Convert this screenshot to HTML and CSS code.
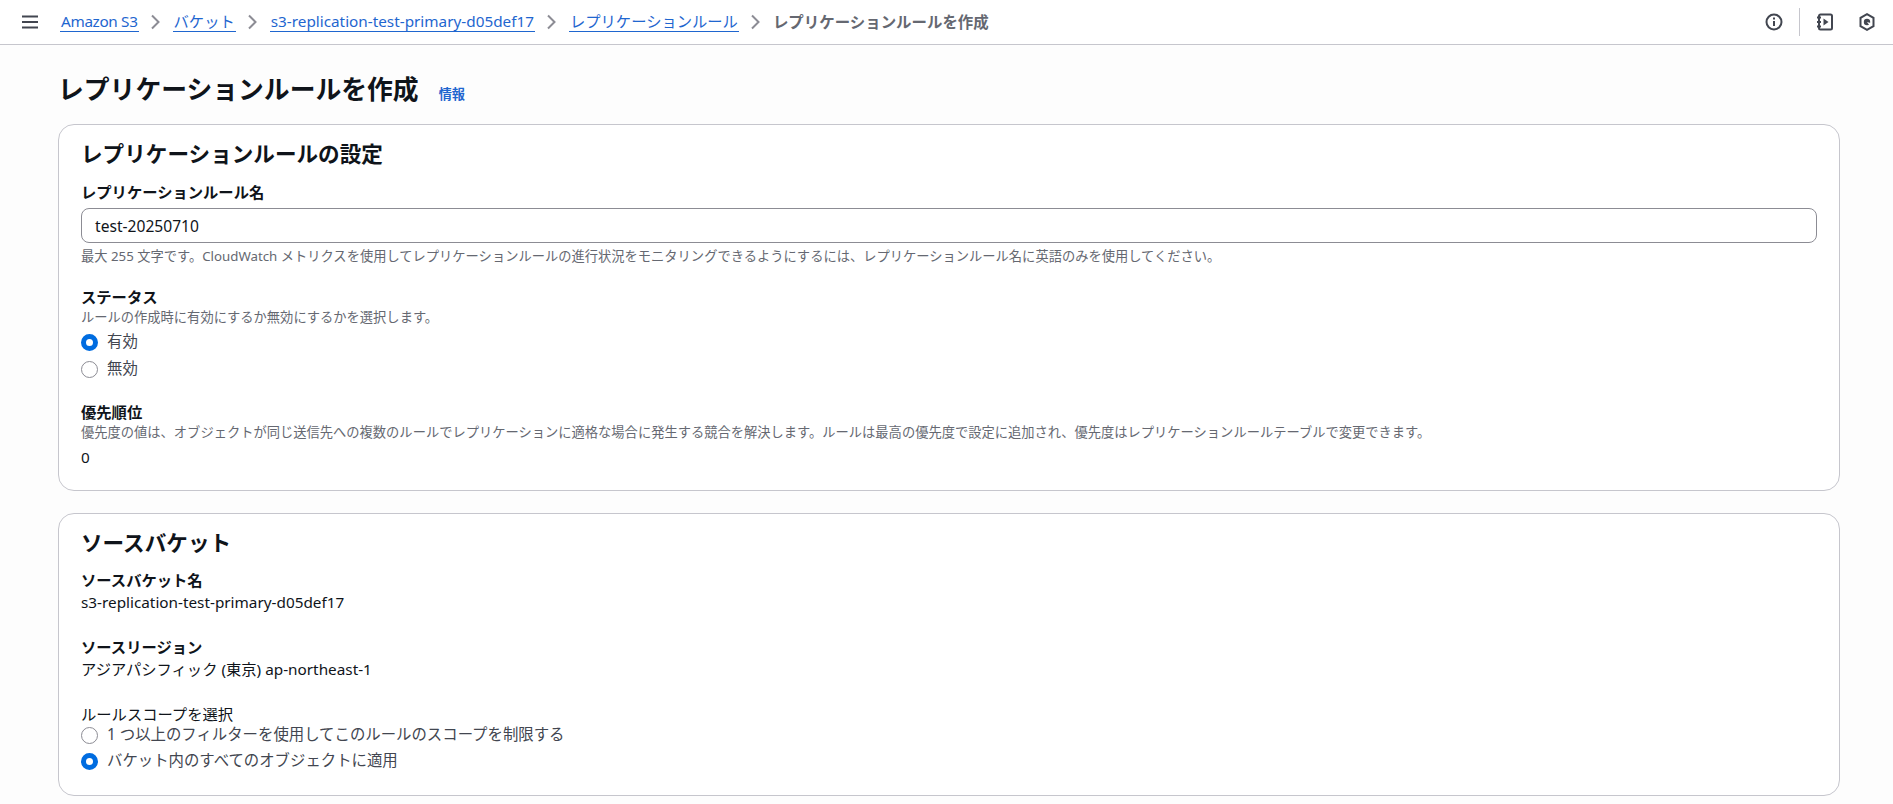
FILE: index.html
```html
<!DOCTYPE html>
<html lang="ja">
<head>
<meta charset="utf-8">
<title>レプリケーションルールを作成</title>
<link rel="stylesheet" href="styles.css">
</head>
<body>
<header class="topbar">
  <svg class="menu" width="16" height="16" viewBox="0 0 16 16"><path d="M0 2.500h16M0 8h16M0 13.500h16" fill="none" stroke="#424650" stroke-width="2"/></svg>
  <nav class="crumbs">
    <a class="crumb crumb-root">Amazon S3</a>
    <svg class="sep" width="16" height="16" viewBox="0 0 16 16"><path d="M4 1.500l6.500 6.500-6.500 6.500" fill="none" stroke="#8c8c94" stroke-width="2"/></svg>
    <a class="crumb">バケット</a>
    <svg class="sep" width="16" height="16" viewBox="0 0 16 16"><path d="M4 1.500l6.500 6.500-6.500 6.500" fill="none" stroke="#8c8c94" stroke-width="2"/></svg>
    <a class="crumb">s3-replication-test-primary-d05def17</a>
    <svg class="sep" width="16" height="16" viewBox="0 0 16 16"><path d="M4 1.500l6.500 6.500-6.500 6.500" fill="none" stroke="#8c8c94" stroke-width="2"/></svg>
    <a class="crumb">レプリケーションルール</a>
    <svg class="sep" width="16" height="16" viewBox="0 0 16 16"><path d="M4 1.500l6.500 6.500-6.500 6.500" fill="none" stroke="#8c8c94" stroke-width="2"/></svg>
    <span class="current">レプリケーションルールを作成</span>
  </nav>
  <div class="tools">
    <svg width="18" height="18" viewBox="0 0 18 18"><circle cx="9" cy="9" r="7.500" fill="none" stroke="#424650" stroke-width="2"/><path d="M9 8v5" stroke="#424650" stroke-width="2"/><path d="M9 4.500v2" stroke="#424650" stroke-width="2"/></svg>
    <span class="divider"></span>
    <svg class="tool2" width="18" height="18" viewBox="0 0 18 18"><path d="M4.500 1.500h10a1.500 1.500 0 0 1 1.500 1.500v12a1.500 1.500 0 0 1-1.500 1.500h-10a1.500 1.500 0 0 1-1.500-1.500v-12a1.500 1.500 0 0 1 1.500-1.500z" fill="none" stroke="#424650" stroke-width="2"/><path d="M1 4.500h4M1 9h4M1 13.500h4" stroke="#424650" stroke-width="1.800"/><path d="M7.500 5.500l5 3.500-5 3.500z" fill="#424650"/></svg>
    <svg class="tool3" width="18" height="18" viewBox="0 0 18 18"><path d="M9 1.200l6.500 3.700v8.200L9 16.800l-6.500-3.700V4.900z" fill="none" stroke="#424650" stroke-width="2"/><circle cx="9" cy="9" r="3.200" fill="#424650"/><path d="M9 9l4.500 1.200-1.500 3z" fill="#fff"/></svg>
  </div>
</header>
<main class="page">
  <div class="title-row">
    <h1>レプリケーションルールを作成</h1>
    <a class="info">情報</a>
  </div>
  <section class="card first">
    <h2>レプリケーションルールの設定</h2>
    <div class="field name-field">
      <div class="label">レプリケーションルール名</div>
      <div class="input">test-20250710</div>
      <div class="hint hint-after">最大 255 文字です。CloudWatch メトリクスを使用してレプリケーションルールの進行状況をモニタリングできるようにするには、レプリケーションルール名に英語のみを使用してください。</div>
    </div>
    <div class="field">
      <div class="label">ステータス</div>
      <div class="hint">ルールの作成時に有効にするか無効にするかを選択します。</div>
      <div class="radios">
        <div class="radio"><span class="dot on"></span>有効</div>
        <div class="radio"><span class="dot"></span>無効</div>
      </div>
    </div>
    <div class="field">
      <div class="label">優先順位</div>
      <div class="hint">優先度の値は、オブジェクトが同じ送信先への複数のルールでレプリケーションに適格な場合に発生する競合を解決します。ルールは最高の優先度で設定に追加され、優先度はレプリケーションルールテーブルで変更できます。</div>
      <div class="value priority">0</div>
    </div>
  </section>
  <section class="card second">
    <h2>ソースバケット</h2>
    <div class="field name-field">
      <div class="label">ソースバケット名</div>
      <div class="value">s3-replication-test-primary-d05def17</div>
    </div>
    <div class="field">
      <div class="label">ソースリージョン</div>
      <div class="value">アジアパシフィック (東京) ap-northeast-1</div>
    </div>
    <div class="field">
      <div class="value">ルールスコープを選択</div>
      <div class="radios tight">
        <div class="radio"><span class="dot"></span>1 つ以上のフィルターを使用してこのルールのスコープを制限する</div>
        <div class="radio"><span class="dot on"></span>バケット内のすべてのオブジェクトに適用</div>
      </div>
    </div>
  </section>
</main>
</body>
</html>
```

FILE: styles.css
```css
* { box-sizing: border-box; }
html, body { height: 100%; }
body {
  margin: 0;
  height: 804px;
  overflow: hidden;
  background: #fdfdfd;
  color: #0f141a;
  font-family: "Noto Sans", "Noto Sans CJK JP", sans-serif;
  font-size: 15.3px;
  line-height: 22px;
}
.topbar {
  height: 45px;
  display: flex;
  align-items: center;
  padding: 0 17px 1px 22px;
  background: #fff;
  border-bottom: 1px solid #c6c6cd;
}
.menu { flex: none; }
.crumbs {
  display: flex;
  align-items: center;
  margin-left: 22px;
}
.crumb {
  color: #1f66cf;
  border-bottom: 1px solid #1f66cf;
  line-height: 20px;
  padding: 0 1px;
}
.crumb-root { letter-spacing: -0.35px; }
.sep { margin: 0 9px; flex: none; }
.current { color: #656871; font-weight: 700; font-size: 15.45px; }
.tools { margin-left: auto; display: flex; align-items: center; }
.divider { width: 1px; height: 28px; background: #c6c6cd; margin: 0 16px; }
.tool2 { margin-right: 24px; }
.page { padding: 0 53px 0 58px; }
.title-row { display: flex; align-items: baseline; padding-top: 26px; height: 79px; }
h1 { margin: 0; font-size: 25.8px; line-height: 36px; font-weight: 700; }
.info { margin-left: 20px; font-size: 13.2px; font-weight: 700; color: #1f66cf; }
.card {
  background: #fff;
  border: 1px solid #c6c6cd;
  border-radius: 16px;
  padding: 14px 22px 0;
  margin-bottom: 22px;
  height: 367px;
}
.card.second { height: 283px; padding-top: 14px; }
h2 { margin: 0; font-size: 21.6px; line-height: 29px; font-weight: 700; }
.field { margin-bottom: 21px; }
.second .field { margin-bottom: 23px; }
.name-field { margin-top: 13px; }
.second .name-field { margin-top: 12px; }
.label { font-weight: 700; }
.input {
  height: 35px;
  margin-top: 5px;
  padding: 0 13px;
  border: 1px solid #8c8c94;
  border-radius: 8px;
  display: flex;
  align-items: center;
  background: #fff;
  font-size: 15.6px;
}
.hint { font-size: 13.27px; line-height: 18px; color: #656871; }
.hint-after { margin-top: 4px; }
.radios { margin-top: 5px; display: flex; flex-direction: column; gap: 5px; }
.radios.tight { margin-top: -1px; gap: 4px; }
.radio { display: flex; align-items: center; height: 22px; color: #424650; font-size: 15.4px; }
.dot {
  width: 17px;
  height: 17px;
  border-radius: 50%;
  border: 1px solid #8c8c94;
  margin-right: 9px;
  background: #fff;
  flex: none;
}
.dot.on { border: 5px solid #006ce0; }
.priority { margin-top: 5px; }
.value { color: #0f141a; }
```
